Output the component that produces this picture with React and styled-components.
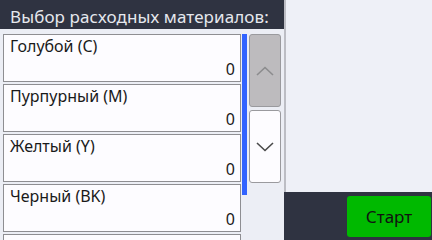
import styled, { createGlobalStyle } from 'styled-components'

const GlobalStyle = createGlobalStyle`
    html, body {
        margin: 0;
        padding: 0;
        background: #eceef5;
    }
    body {
        font-family: "Noto Sans", "Open Sans", sans-serif;
    }
`

// last row is only partly on screen, its text sits below the fold
const items = [
    { name: 'Голубой (C)', value: 0 },
    { name: 'Пурпурный (M)', value: 0 },
    { name: 'Желтый (Y)', value: 0 },
    { name: 'Черный (BK)', value: 0 },
    { name: '', value: '' },
]

const Chevron = ({ dir, color }) => (
    <svg width="18" height="10" viewBox="0 0 18 10">
        <path
            d={dir === 'up' ? 'M1 9 L9 1.5 L17 9' : 'M1 1 L9 8.5 L17 1'}
            fill="none"
            stroke={color}
            strokeWidth="1.6"
        />
    </svg>
)

const App = () => {
    return (
        <>
            <GlobalStyle />
            <Screen>
                <LeftPanel>
                    <Header>Выбор расходных материалов:</Header>
                    <Body>
                        <List>
                            {items.map((item, i) => (
                                <Row key={i}>
                                    <Label>{item.name}</Label>
                                    <Value>{item.value}</Value>
                                </Row>
                            ))}
                        </List>
                        <Track>
                            <Thumb />
                        </Track>
                        <Arrows>
                            <ArrowButton $disabled>
                                <Chevron dir="up" color="#8c8c8e" />
                            </ArrowButton>
                            <ArrowButton>
                                <Chevron dir="down" color="#4a4a4a" />
                            </ArrowButton>
                        </Arrows>
                    </Body>
                </LeftPanel>
                <RightPanel>
                    <Blank />
                    <BottomBar>
                        <StartButton>Старт</StartButton>
                    </BottomBar>
                </RightPanel>
            </Screen>
        </>
    )
}

const Screen = styled.div`
    display: flex;
    width: 432px;
    height: 240px;
    overflow: hidden;
`
const LeftPanel = styled.div`
    width: 284px;
    display: flex;
    flex-direction: column;
    background: #eceef5;
`
const Header = styled.div`
    height: 29px;
    box-sizing: border-box;
    padding: 5px 0 0 10px;
    background: #2f3341;
    color: #e6e8ee;
    font-size: 17px;
    line-height: 24px;
    letter-spacing: 0.1px;
    white-space: nowrap;
`
const Body = styled.div`
    flex: 1;
    display: flex;
    align-items: flex-start;
    padding: 5px 0 0 3px;
    overflow: hidden;
`
const List = styled.div`
    width: 238px;
    display: flex;
    flex-direction: column;
    gap: 2px;
`
const Row = styled.div`
    height: 48px;
    flex-shrink: 0;
    box-sizing: border-box;
    border: 1px solid #8e8e92;
    background: #fdfcff;
    padding: 1px 5px 2px 6px;
    display: flex;
    flex-direction: column;
    justify-content: space-between;
    font-size: 16px;
    line-height: 20px;
    color: #1a1a1a;
`
const Label = styled.div`
    white-space: nowrap;
    min-height: 20px;
`
const Value = styled.div`
    text-align: right;
    min-height: 20px;
`
const Track = styled.div`
    width: 5px;
    margin-left: 1px;
`
const Thumb = styled.div`
    height: 161px;
    background: #3263ff;
`
const Arrows = styled.div`
    display: flex;
    flex-direction: column;
    gap: 3px;
    margin-left: 2px;
`
const ArrowButton = styled.div`
    width: 32px;
    height: 73px;
    box-sizing: border-box;
    border: 1px solid #9a9a9e;
    border-radius: 3px;
    background: ${(p) => (p.$disabled ? '#bdbbbe' : '#fdfcff')};
    display: flex;
    align-items: center;
    justify-content: center;
`
const RightPanel = styled.div`
    flex: 1;
    display: flex;
    flex-direction: column;
`
const Blank = styled.div`
    flex: 1;
    background: #eef0f7;
    border-left: 2px solid #bcbdc4;
`
const BottomBar = styled.div`
    height: 48px;
    background: #2f3341;
    display: flex;
    justify-content: flex-end;
    align-items: center;
    padding-right: 1px;
`
const StartButton = styled.div`
    width: 84px;
    height: 41px;
    border-radius: 3px;
    background: #00b900;
    color: #111;
    font-size: 17px;
    display: flex;
    align-items: center;
    justify-content: center;
`

export default App
